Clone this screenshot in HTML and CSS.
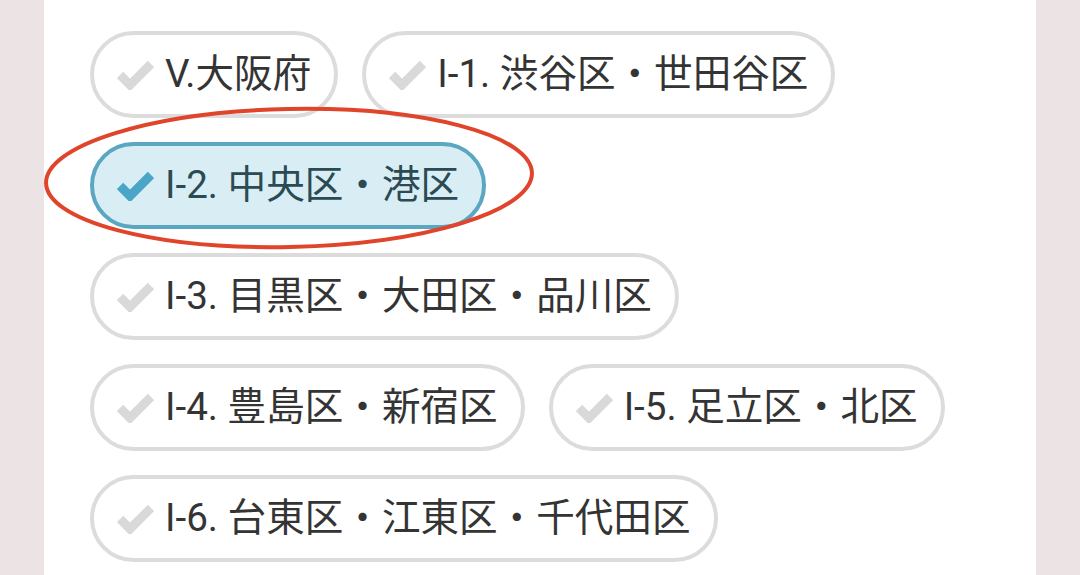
FILE: index.html
```html
<!DOCTYPE html>
<html lang="ja">
<head>
<meta charset="utf-8">
<link rel="stylesheet" href="styles.css">
</head>
<body>
<div class="panel">
  <span class="chip"><svg class="check" viewBox="0 0 37 30"><polyline points="3,15 13,25 34,4"/></svg><span class="label">V.大阪府</span></span>
  <span class="chip"><svg class="check" viewBox="0 0 37 30"><polyline points="3,15 13,25 34,4"/></svg><span class="label">I-1. 渋谷区・世田谷区</span></span>
  <span class="chip selected"><svg class="check" viewBox="0 0 37 30"><polyline points="3,15 13,25 34,4"/></svg><span class="label">I-2. 中央区・港区</span></span>
  <span class="chip"><svg class="check" viewBox="0 0 37 30"><polyline points="3,15 13,25 34,4"/></svg><span class="label">I-3. 目黒区・大田区・品川区</span></span>
  <span class="chip"><svg class="check" viewBox="0 0 37 30"><polyline points="3,15 13,25 34,4"/></svg><span class="label">I-4. 豊島区・新宿区</span></span>
  <span class="chip"><svg class="check" viewBox="0 0 37 30"><polyline points="3,15 13,25 34,4"/></svg><span class="label">I-5. 足立区・北区</span></span>
  <span class="chip"><svg class="check" viewBox="0 0 37 30"><polyline points="3,15 13,25 34,4"/></svg><span class="label">I-6. 台東区・江東区・千代田区</span></span>
</div>
<svg class="annotation" viewBox="0 0 1080 575" width="1080" height="575">
  <ellipse cx="289" cy="178" rx="243" ry="69" transform="rotate(-1.2 289 178)"/>
</svg>
</body>
</html>
```
FILE: styles.css
```css
html, body {
  margin: 0;
  padding: 0;
}
body {
  background: #ece3e5;
  width: 1080px;
  height: 575px;
  overflow: hidden;
  position: relative;
  font-family: Roboto, "Noto Sans CJK JP", sans-serif;
}
.panel {
  margin-left: 44px;
  width: 992px;
  height: 575px;
  box-sizing: border-box;
  background: #ffffff;
  padding: 31px 46px 0 46px;
  display: flex;
  flex-wrap: wrap;
  align-content: flex-start;
  gap: 24px 24px;
}
.chip {
  display: inline-flex;
  align-items: center;
  box-sizing: border-box;
  height: 87px;
  border: 4px solid #dcdcdc;
  border-radius: 44px;
  padding: 0 23px 0 23px;
  gap: 11px;
  background: #ffffff;
  color: #343434;
  font-size: 38.6px;
  line-height: 1;
  white-space: nowrap;
}
.check {
  width: 37px;
  height: 30px;
  flex: none;
}
.check polyline {
  fill: none;
  stroke: #d9d9d9;
  stroke-width: 9;
  stroke-linejoin: miter;
  stroke-linecap: butt;
}
.chip.selected {
  border-color: #5ba6c1;
  background: #d8eef4;
  color: #2b4a53;
}
.chip.selected .check polyline {
  stroke: #4ba5c6;
}
.label {
  display: block;
}
.annotation {
  position: absolute;
  left: 0;
  top: 0;
  pointer-events: none;
}
.annotation ellipse {
  fill: none;
  stroke: #e0442a;
  stroke-width: 4;
}
```
